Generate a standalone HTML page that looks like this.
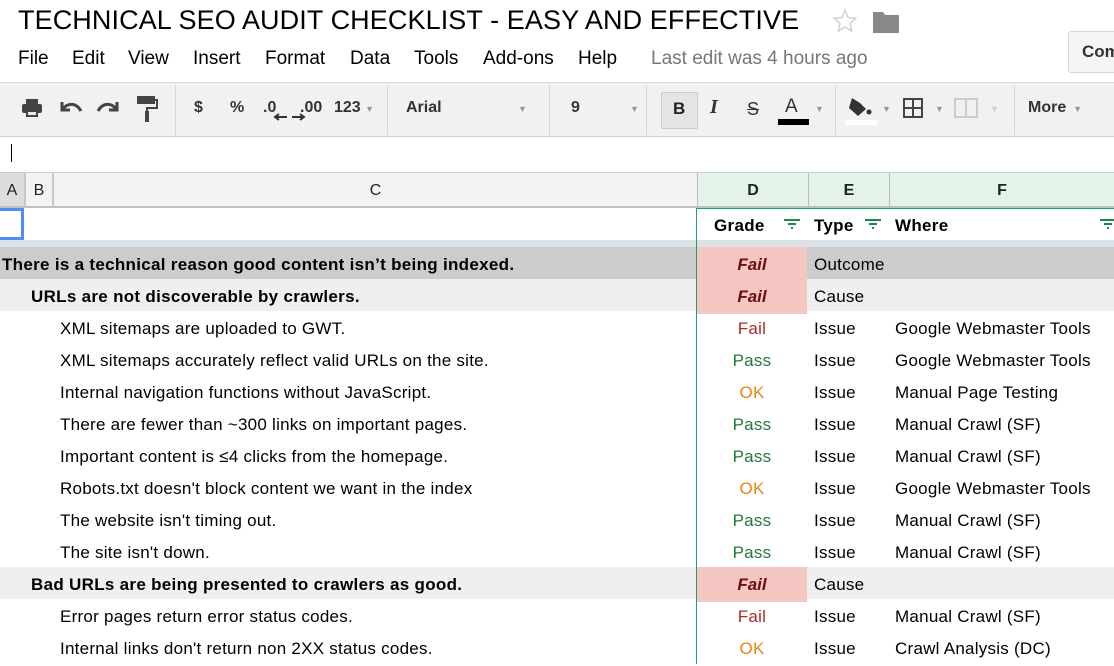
<!DOCTYPE html>
<html><head><meta charset="utf-8"><style>
*{box-sizing:border-box;margin:0;padding:0}
body{width:1114px;height:664px;overflow:hidden;background:#fff;font-family:"Liberation Sans",Arial,sans-serif;position:relative;color:#000}
.abs{position:absolute}
.title{left:18px;top:5px;font-size:27px;letter-spacing:0.1px;white-space:nowrap}
.menu{top:48px;font-size:19px;white-space:nowrap}
.tb{left:0;top:82px;width:1114px;height:55px;background:#f1f1f1;border-top:1px solid #dadada;border-bottom:1px solid #d0d0d0}
.sep{position:absolute;top:2px;width:1px;height:50px;background:#d6d6d6}
.tbt{position:absolute;top:16px;font-size:16px;font-weight:bold;color:#333}
.colh{top:172px;height:36px;background:#f3f3f3;border-top:1px solid #ccc;border-bottom:2px solid #c0c0c0;font-size:16px;color:#222;text-align:center;line-height:36px}
.row{position:absolute;left:0;width:1114px;height:32px;font-size:17px;line-height:35px;white-space:nowrap;letter-spacing:0.25px}
.row span{position:absolute}
.b{font-weight:bold;letter-spacing:0.3px}
.b .t{font-weight:normal;letter-spacing:0.25px}
.g{left:697px;width:110px;text-align:center}
.t{left:814px}.w{left:895px}
.fail{color:#a62a2a}.pass{color:#237a3c}.ok{color:#e8860c}
.gf{background:#f4c7c3;color:#6d0d0d;font-style:italic;letter-spacing:0}
</style></head><body>
<div class="abs title">TECHNICAL SEO AUDIT CHECKLIST - EASY AND EFFECTIVE</div>
<svg class="abs" style="left:832px;top:8px" width="26" height="26" viewBox="0 0 24 24"><path d="M12 2l2.9 6.9 7.1.6-5.4 4.7 1.6 7-6.2-3.8-6.2 3.8 1.6-7L2 9.5l7.1-.6z" fill="none" stroke="#ccc" stroke-width="1.2"/></svg>
<svg class="abs" style="left:873px;top:11px" width="26" height="22" viewBox="0 0 26 22"><path d="M0 1h10l2 3h14v18H0z" fill="#888"/></svg>
<div class="abs menu" style="left:18px">File</div>
<div class="abs menu" style="left:72px">Edit</div>
<div class="abs menu" style="left:128px">View</div>
<div class="abs menu" style="left:193px">Insert</div>
<div class="abs menu" style="left:265px">Format</div>
<div class="abs menu" style="left:350px">Data</div>
<div class="abs menu" style="left:414px">Tools</div>
<div class="abs menu" style="left:483px">Add-ons</div>
<div class="abs menu" style="left:578px">Help</div>
<div class="abs menu" style="left:651px;color:#777">Last edit was 4 hours ago</div>
<div class="abs" style="left:1068px;top:31px;width:60px;height:42px;border:1px solid #d6d6d6;border-radius:3px;background:#f5f5f5;font-weight:bold;font-size:17px;line-height:40px;padding-left:13px;color:#333">Com</div>
<div class="abs tb">
 <svg class="abs" style="left:21px;top:14px" width="22" height="22" viewBox="0 0 22 22"><rect x="5" y="2" width="12" height="5" fill="#444"/><rect x="1" y="7" width="20" height="9" rx="2" fill="#444"/><rect x="5" y="13" width="12" height="7" fill="#444"/><rect x="7" y="15" width="8" height="3" fill="#f1f1f1"/></svg>
 <svg class="abs" style="left:58px;top:16px" width="26" height="16" viewBox="0 0 26 16"><path d="M4 3v8h8" fill="none" stroke="#444" stroke-width="3"/><path d="M5 10C9 4 18 3 23 12" fill="none" stroke="#444" stroke-width="3"/></svg>
 <svg class="abs" style="left:95px;top:16px" width="26" height="16" viewBox="0 0 26 16"><path d="M22 3v8h-8" fill="none" stroke="#444" stroke-width="3"/><path d="M21 10C17 4 8 3 3 12" fill="none" stroke="#444" stroke-width="3"/></svg>
 <svg class="abs" style="left:135px;top:11px" width="24" height="30" viewBox="0 0 24 30"><rect x="2" y="2" width="18" height="8" fill="#444"/><path d="M20 6h2v8h-10v4" fill="none" stroke="#444" stroke-width="2"/><rect x="10" y="17" width="4" height="11" fill="#444"/></svg>
 <div class="sep" style="left:175px"></div>
 <div class="tbt" style="left:194px">$</div>
 <div class="tbt" style="left:230px">%</div>
 <div class="tbt" style="left:263px">.0</div>
 <svg class="abs" style="left:273px;top:30px" width="14" height="8"><path d="M14 4H3M6 1L2 4l4 3" fill="none" stroke="#333" stroke-width="2"/></svg>
 <div class="tbt" style="left:300px">.00</div>
 <svg class="abs" style="left:292px;top:30px" width="14" height="8"><path d="M0 4h11M8 1l4 3-4 3" fill="none" stroke="#333" stroke-width="2"/></svg>
 <div class="tbt" style="left:334px">123 <span style="font-size:9px;color:#999">▼</span></div>
 <div class="sep" style="left:387px"></div>
 <div class="tbt" style="left:406px">Arial</div>
 <div class="tbt" style="left:518px;font-size:9px;color:#999;top:21px">▼</div>
 <div class="sep" style="left:549px"></div>
 <div class="tbt" style="left:571px">9</div>
 <div class="tbt" style="left:630px;font-size:9px;color:#999;top:21px">▼</div>
 <div class="sep" style="left:646px"></div>
 <div class="abs" style="left:661px;top:9px;width:37px;height:37px;border:1px solid #ccc;border-radius:2px;background:#e4e4e4"></div>
 <div class="tbt" style="left:673px;font-size:17px;color:#222">B</div>
 <div class="tbt" style="left:710px;font-family:'Liberation Serif',serif;font-style:italic;font-size:20px;top:13px">I</div>
 <div class="tbt" style="left:747px;text-decoration:line-through;font-weight:normal;font-size:18px">S</div>
 <div class="tbt" style="left:785px;font-weight:normal;font-size:19px;top:13px">A</div>
 <div class="abs" style="left:778px;top:36px;width:31px;height:6px;background:#000"></div>
 <div class="tbt" style="left:815px;font-size:9px;color:#999;top:21px">▼</div>
 <div class="sep" style="left:835px"></div>
 <svg class="abs" style="left:848px;top:12px" width="26" height="22" viewBox="0 0 26 22"><path d="M4 3l8 5 6 6-8 7-9-8z" fill="#333"/><circle cx="21" cy="17" r="2.5" fill="#333"/></svg>
 <div class="abs" style="left:845px;top:37px;width:32px;height:5px;background:#fff"></div>
 <div class="tbt" style="left:882px;font-size:9px;color:#999;top:21px">▼</div>
 <svg class="abs" style="left:903px;top:15px" width="20" height="20" viewBox="0 0 20 20"><path d="M1 1h18v18H1zM10 1v18M1 10h18" fill="none" stroke="#444" stroke-width="2"/></svg>
 <div class="tbt" style="left:935px;font-size:9px;color:#999;top:21px">▼</div>
 <svg class="abs" style="left:954px;top:15px" width="24" height="20" viewBox="0 0 24 20"><path d="M1 1h22v18H1zM12 1v18" fill="none" stroke="#ccc" stroke-width="2"/></svg>
 <div class="tbt" style="left:990px;font-size:9px;color:#ccc;top:21px">▼</div>
 <div class="sep" style="left:1014px"></div>
 <div class="tbt" style="left:1028px">More <span style="font-size:9px;color:#999">&nbsp;▼</span></div>
</div>
<div class="abs" style="left:11px;top:144px;width:1px;height:18px;background:#000"></div>
<div class="abs colh" style="left:0;width:24px;background:#ddd">A</div>
<div class="abs colh" style="left:24px;width:30px;border-left:2px solid #c8c8c8;border-right:2px solid #c8c8c8">B</div>
<div class="abs colh" style="left:54px;width:643px">C</div>
<div class="abs colh" style="left:697px;width:111px;background:#e3f3ea;border-left:1px solid #bbb;font-weight:bold">D</div>
<div class="abs colh" style="left:808px;width:81px;background:#e3f3ea;border-left:1px solid #bbb;font-weight:bold">E</div>
<div class="abs colh" style="left:889px;width:225px;background:#e3f3ea;border-left:1px solid #bbb;font-weight:bold">F</div>
<div class="abs" style="left:0;top:208px;width:24px;height:32px;border:3px solid #4d8ef0;border-left:none"></div>
<div class="row b" style="top:208px">
 <span style="left:714px">Grade</span>
 <span style="left:814px">Type</span><span style="left:895px">Where</span>
</div>
<svg class="abs" style="left:784px;top:219px" width="16" height="10"><path d="M0 1h16M4 5h8M7 9h2" stroke="#1a8a4a" stroke-width="2"/></svg>
<svg class="abs" style="left:865px;top:219px" width="16" height="10"><path d="M0 1h16M4 5h8M7 9h2" stroke="#1a8a4a" stroke-width="2"/></svg>
<svg class="abs" style="left:1100px;top:219px" width="16" height="10"><path d="M0 1h16M4 5h8M7 9h2" stroke="#1a8a4a" stroke-width="2"/></svg>
<div class="abs" style="left:0;top:240px;width:1114px;height:7px;background:#dde1e8"></div>

<div class="row b" style="top:247px;background:#cccccc"><span style="left:2px">There is a technical reason good content isn’t being indexed.</span><span class="g gf">Fail</span><span class="t">Outcome</span></div>
<div class="row b" style="top:279px;background:#efefef"><span style="left:31px">URLs are not discoverable by crawlers.</span><span class="g gf">Fail</span><span class="t">Cause</span></div>
<div class="row" style="top:311px"><span style="left:60px">XML sitemaps are uploaded to GWT.</span><span class="g fail">Fail</span><span class="t">Issue</span><span class="w">Google Webmaster Tools</span></div>
<div class="row" style="top:343px"><span style="left:60px">XML sitemaps accurately reflect valid URLs on the site.</span><span class="g pass">Pass</span><span class="t">Issue</span><span class="w">Google Webmaster Tools</span></div>
<div class="row" style="top:375px"><span style="left:60px">Internal navigation functions without JavaScript.</span><span class="g ok">OK</span><span class="t">Issue</span><span class="w">Manual Page Testing</span></div>
<div class="row" style="top:407px"><span style="left:60px">There are fewer than ~300 links on important pages.</span><span class="g pass">Pass</span><span class="t">Issue</span><span class="w">Manual Crawl (SF)</span></div>
<div class="row" style="top:439px"><span style="left:60px">Important content is ≤4 clicks from the homepage.</span><span class="g pass">Pass</span><span class="t">Issue</span><span class="w">Manual Crawl (SF)</span></div>
<div class="row" style="top:471px"><span style="left:60px">Robots.txt doesn't block content we want in the index</span><span class="g ok">OK</span><span class="t">Issue</span><span class="w">Google Webmaster Tools</span></div>
<div class="row" style="top:503px"><span style="left:60px">The website isn't timing out.</span><span class="g pass">Pass</span><span class="t">Issue</span><span class="w">Manual Crawl (SF)</span></div>
<div class="row" style="top:535px"><span style="left:60px">The site isn't down.</span><span class="g pass">Pass</span><span class="t">Issue</span><span class="w">Manual Crawl (SF)</span></div>
<div class="row b" style="top:567px;background:#efefef"><span style="left:31px">Bad URLs are being presented to crawlers as good.</span><span class="g gf">Fail</span><span class="t">Cause</span></div>
<div class="row" style="top:599px"><span style="left:60px">Error pages return error status codes.</span><span class="g fail">Fail</span><span class="t">Issue</span><span class="w">Manual Crawl (SF)</span></div>
<div class="row" style="top:631px"><span style="left:60px">Internal links don't return non 2XX status codes.</span><span class="g ok">OK</span><span class="t">Issue</span><span class="w">Crawl Analysis (DC)</span></div>
<div class="abs" style="left:696px;top:208px;width:1px;height:456px;background:#1aa260"></div>
<div class="abs" style="left:697px;top:208px;width:417px;height:1px;background:#1aa260"></div>
</body></html>
